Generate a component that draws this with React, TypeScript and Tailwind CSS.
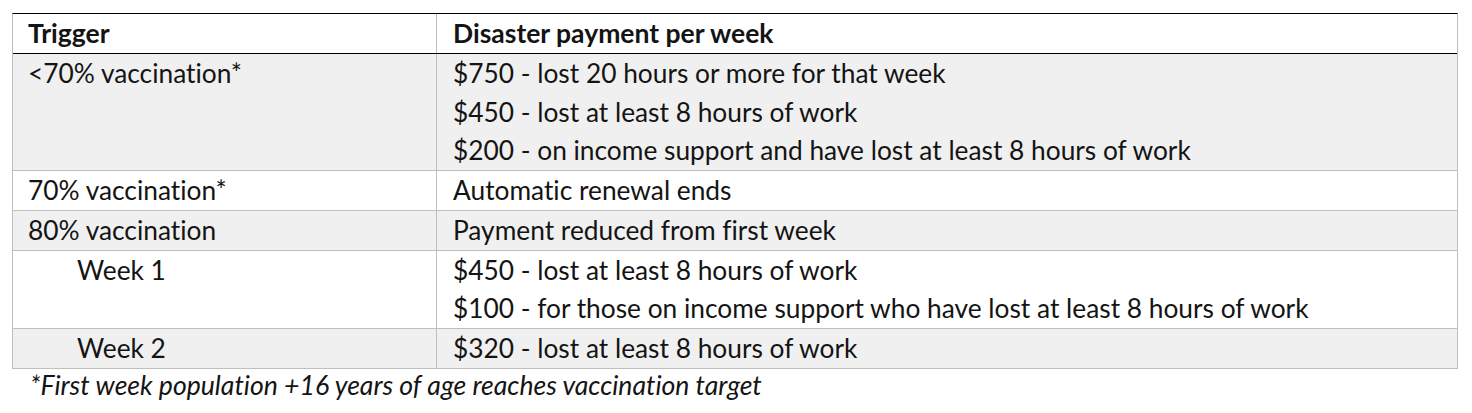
const rows = [
  {
    trigger: "<70% vaccination*",
    indent: false,
    shaded: true,
    lines: [
      "$750 - lost 20 hours or more for that week",
      "$450 - lost at least 8 hours of work",
      "$200 - on income support and have lost at least 8 hours of work",
    ],
  },
  {
    trigger: "70% vaccination*",
    indent: false,
    shaded: false,
    lines: ["Automatic renewal ends"],
  },
  {
    trigger: "80% vaccination",
    indent: false,
    shaded: true,
    lines: ["Payment reduced from first week"],
  },
  {
    trigger: "Week 1",
    indent: true,
    shaded: false,
    lines: [
      "$450 - lost at least 8 hours of work",
      "$100 - for those on income support who have lost at least 8 hours of work",
    ],
  },
  {
    trigger: "Week 2",
    indent: true,
    shaded: true,
    lines: ["$320 - lost at least 8 hours of work"],
  },
];

export default function App() {
  return (
    <div className="w-[1472px] h-[413px] bg-white pl-3 pt-[13px] font-['Lato',sans-serif] [font-variant-ligatures:none] text-[26.3px] text-[#141414]">
      <div className="w-[1446px] border-t border-t-black border-x border-x-[#bfbfbf]">
        {/* Header */}
        <div className="grid grid-cols-[424px_1fr] border-b border-b-black leading-[39px] font-bold text-[26.5px]">
          <div className="pl-[15px] border-r border-r-[#bfbfbf]">Trigger</div>
          <div className="pl-4">Disaster payment per week</div>
        </div>

        {rows.map((row) => (
          <div
            key={row.trigger}
            className={
              "grid grid-cols-[424px_1fr] border-b border-b-[#bfbfbf] " +
              (row.shaded ? "bg-[#f0f0f0]" : "bg-white") +
              (row.lines.length > 1 ? " leading-[38.5px]" : " leading-[39px]")
            }
          >
            <div
              className={
                "border-r border-r-[#bfbfbf] " + (row.indent ? "pl-16" : "pl-[15px]")
              }
            >
              {row.trigger}
            </div>
            <div className="pl-4 flex flex-col">
              {row.lines.map((line) => (
                <span key={line}>{line}</span>
              ))}
            </div>
          </div>
        ))}
      </div>
      <p className="pl-[18px] pt-[1px] italic leading-[30px] text-[26.6px]">
        *First week population +16 years of age reaches vaccination target
      </p>
    </div>
  );
}
